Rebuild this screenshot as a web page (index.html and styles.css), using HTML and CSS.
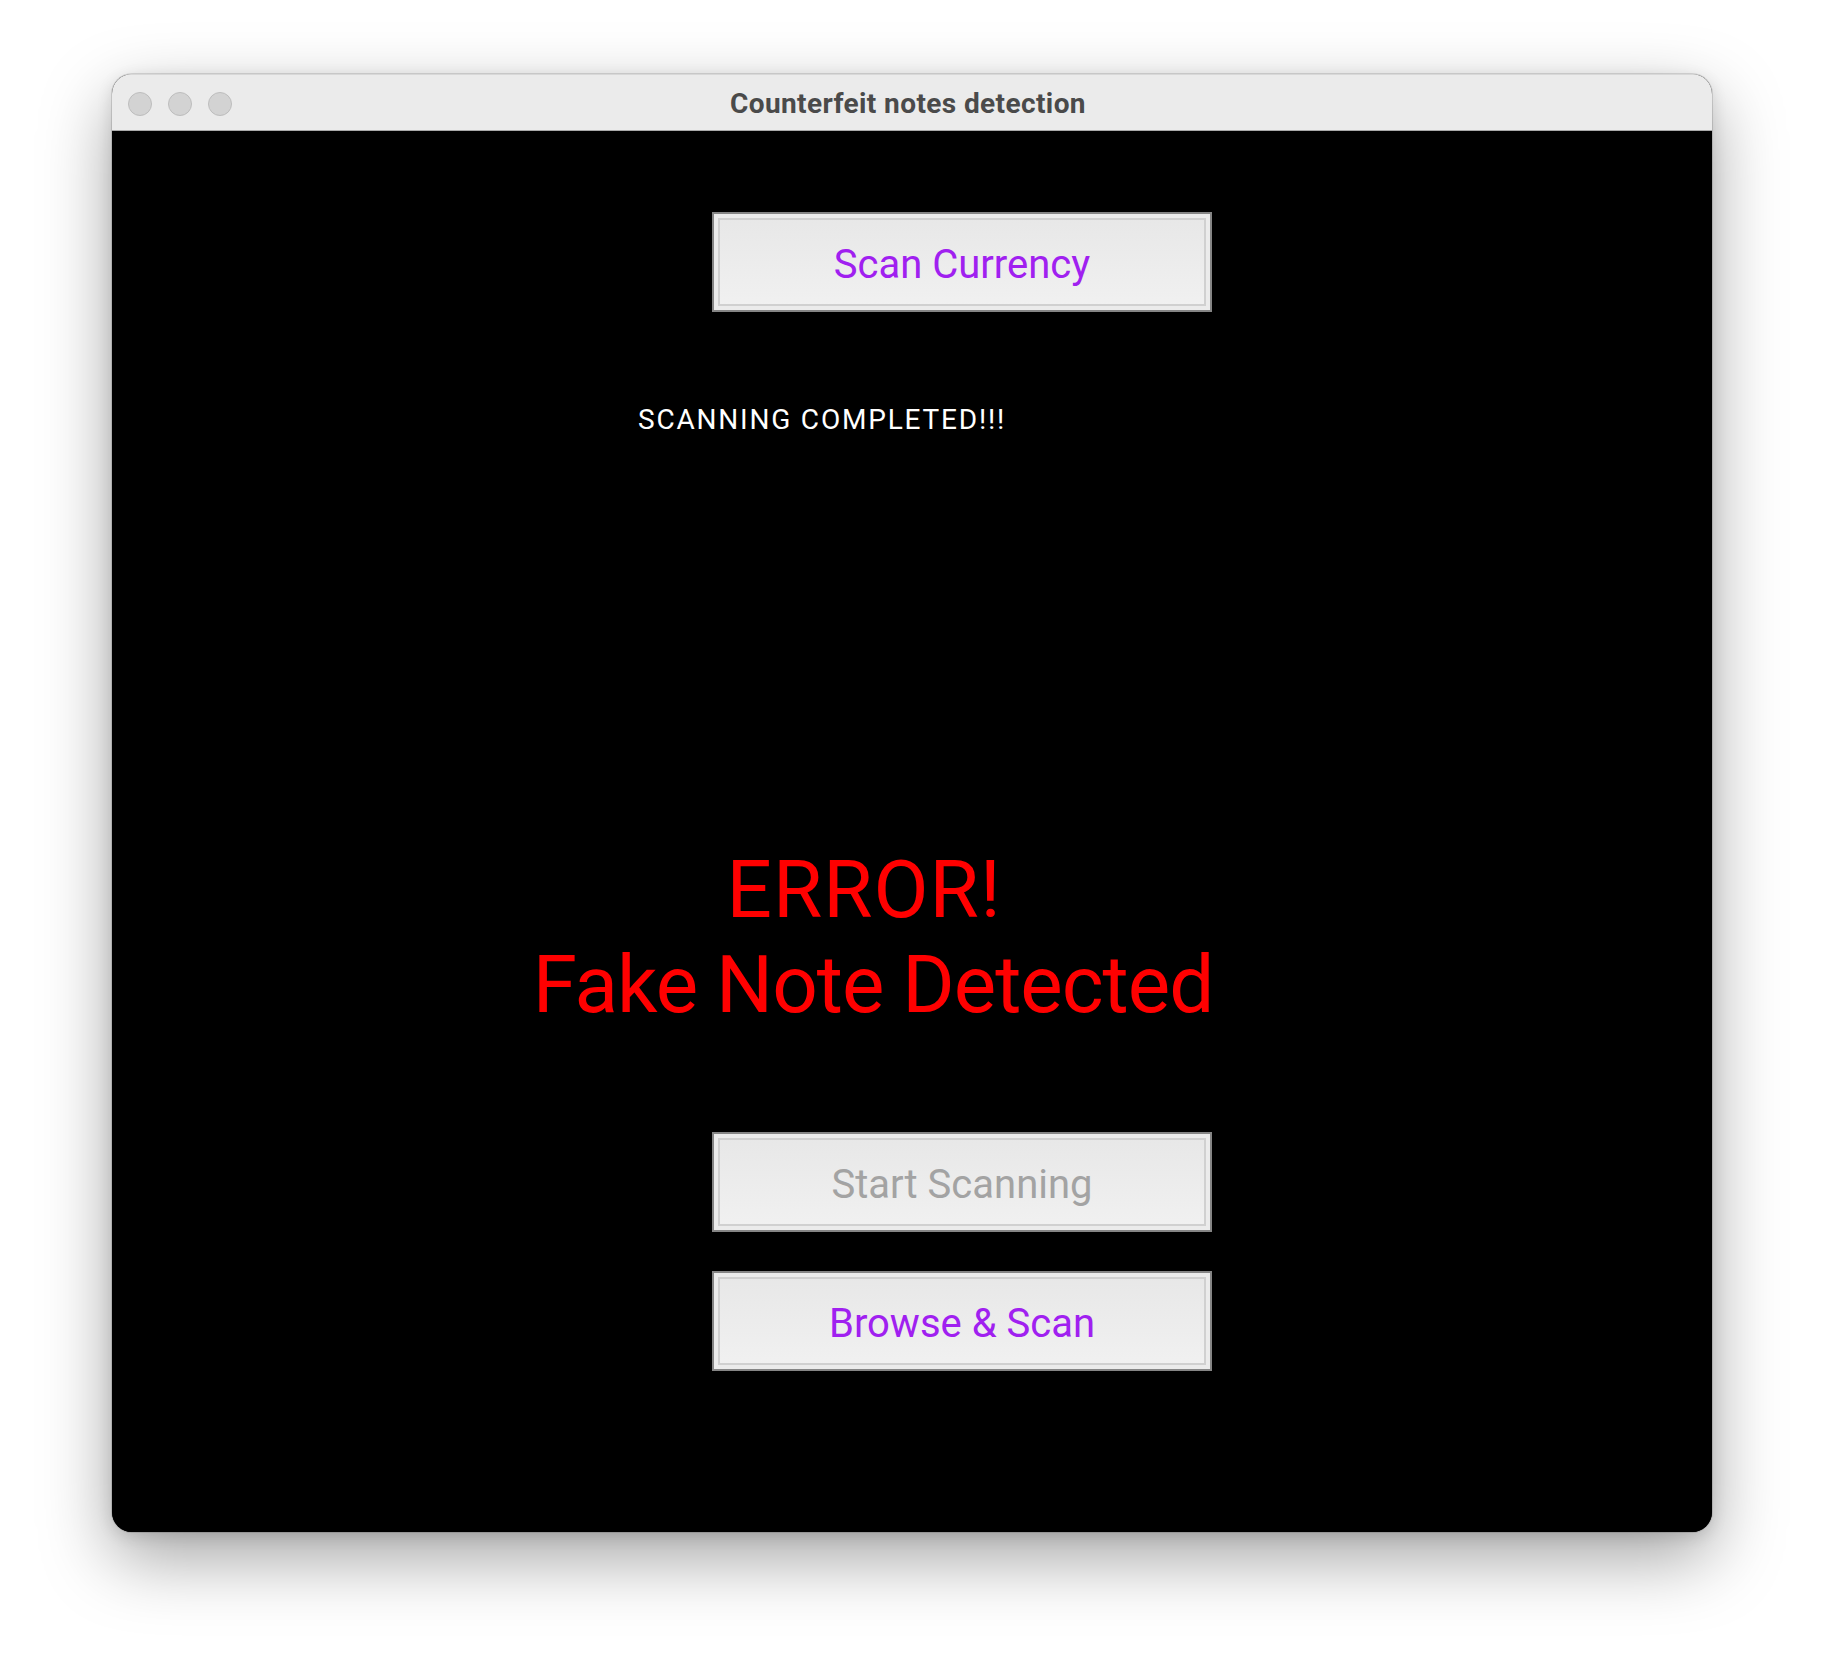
FILE: index.html
```html
<!DOCTYPE html>
<html lang="en">
<head>
<meta charset="utf-8">
<title>Counterfeit notes detection</title>
<link rel="stylesheet" href="styles.css">
</head>
<body>
  <div class="window">
    <div class="titlebar">
      <div class="lights">
        <span class="light"></span>
        <span class="light"></span>
        <span class="light"></span>
      </div>
      <div class="title">Counterfeit notes detection</div>
    </div>
    <div class="content">
      <div class="btn btn-active btn-first">Scan Currency</div>
      <div class="status">SCANNING COMPLETED!!!</div>
      <div class="result"><span class="result-head">ERROR!</span><br>Fake Note Detected</div>
      <div class="btn btn-disabled btn-second">Start Scanning</div>
      <div class="btn btn-active btn-third">Browse &amp; Scan</div>
    </div>
  </div>
</body>
</html>
```
FILE: styles.css
```css
html, body {
  margin: 0;
  padding: 0;
  background: #ffffff;
}

body {
  box-sizing: border-box;
  min-height: 1680px;
  padding: 74px 0 0 112px;
  font-family: Roboto, "Liberation Sans", sans-serif;
}

.window {
  width: 1600px;
  height: 1458px;
  border-radius: 20px;
  overflow: hidden;
  background: #000;
  box-shadow: 0 0 0 1px rgba(0, 0, 0, 0.12), 0 26px 70px rgba(0, 0, 0, 0.36), 0 4px 16px rgba(0, 0, 0, 0.12);
  display: flex;
  flex-direction: column;
}

.titlebar {
  height: 55px;
  background: #ebebeb;
  border-top: 1px solid #d8d8d8;
  border-bottom: 1px solid #a9a9a9;
  display: flex;
  align-items: center;
  position: relative;
  flex: none;
}

.lights {
  display: flex;
  gap: 16px;
  padding-left: 16px;
  padding-top: 2px;
}

.light {
  width: 22px;
  height: 22px;
  border-radius: 50%;
  background: #d3d3d3;
  border: 1px solid #bdbdbd;
}

.title {
  position: absolute;
  left: 0;
  right: 0;
  top: 0;
  bottom: 0;
  display: flex;
  align-items: center;
  justify-content: center;
  font-weight: bold;
  font-size: 28px;
  letter-spacing: 0.4px;
  color: #4a4a4a;
  padding-top: 1px;
  padding-right: 8px;
}

.content {
  flex: 1;
  background: #000;
  display: flex;
  flex-direction: column;
  padding-top: 81px;
}

.btn {
  width: 500px;
  height: 100px;
  box-sizing: border-box;
  margin-left: 600px;
  border: 2px solid #858585;
  background: linear-gradient(#e7e7e7, #f1f1f1);
  box-shadow: inset 0 0 0 4px #ebebeb, inset 0 0 0 6px #d0d0d0;
  display: flex;
  align-items: center;
  justify-content: center;
  font-size: 40px;
  padding-top: 5px;
}

.btn-active {
  color: #a020f0;
}

.btn-disabled {
  color: #a3a3a3;
}

.status {
  margin-top: 91px;
  margin-left: 526px;
  font-size: 28px;
  line-height: 34px;
  letter-spacing: 1.8px;
  color: #ffffff;
}

.result {
  margin-top: 406px;
  margin-left: 361px;
  width: 800px;
  text-align: center;
  font-size: 80px;
  line-height: 95px;
  letter-spacing: -1px;
  color: #ff0000;
}

.result-head {
  display: inline-block;
  letter-spacing: 1px;
  padding-right: 18px;
}

.btn-second {
  margin-top: 99px;
}

.btn-third {
  margin-top: 39px;
}
```
